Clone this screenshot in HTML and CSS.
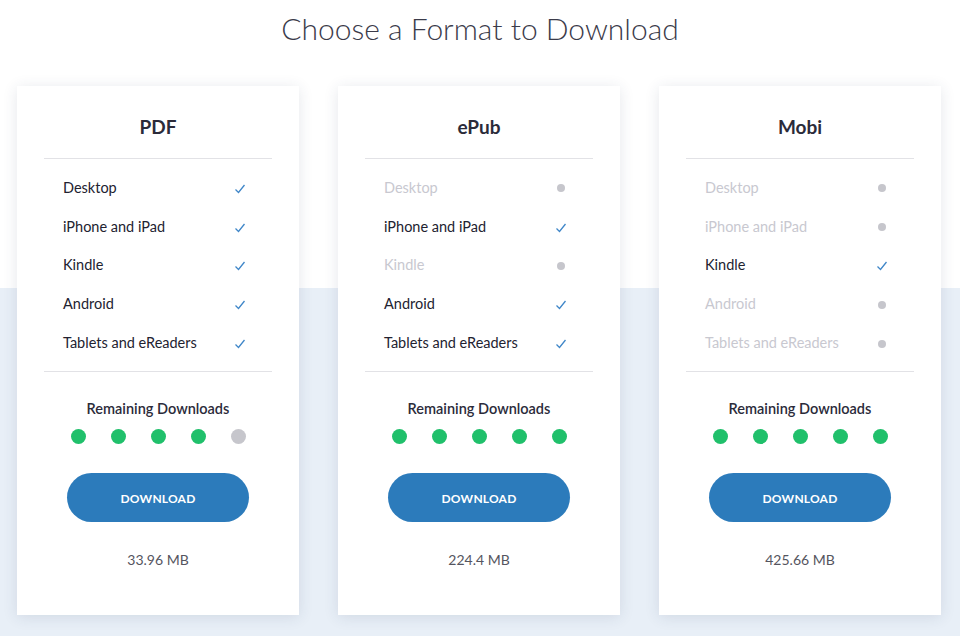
FILE: index.html
```html
<!DOCTYPE html>
<html>
<head>
<meta charset="utf-8">
<link rel="stylesheet" href="styles.css">
</head>
<body>
<div class="page">
  <h1 class="title">Choose a Format to Download</h1>
  <div class="cards">
    <div class="card">
      <h2 class="card-title">PDF</h2>
      <ul class="features">
        <li class="feat on"><span>Desktop</span><svg class="check" viewBox="0 0 10 10"><path d="M0.5 5.5 L3.5 8.5 L9.5 1"/></svg></li>
        <li class="feat on"><span>iPhone and iPad</span><svg class="check" viewBox="0 0 10 10"><path d="M0.5 5.5 L3.5 8.5 L9.5 1"/></svg></li>
        <li class="feat on"><span>Kindle</span><svg class="check" viewBox="0 0 10 10"><path d="M0.5 5.5 L3.5 8.5 L9.5 1"/></svg></li>
        <li class="feat on"><span>Android</span><svg class="check" viewBox="0 0 10 10"><path d="M0.5 5.5 L3.5 8.5 L9.5 1"/></svg></li>
        <li class="feat on"><span>Tablets and eReaders</span><svg class="check" viewBox="0 0 10 10"><path d="M0.5 5.5 L3.5 8.5 L9.5 1"/></svg></li>
      </ul>
      <div class="remaining">Remaining Downloads</div>
      <div class="dots"><i class="dot"></i><i class="dot"></i><i class="dot"></i><i class="dot"></i><i class="dot used"></i></div>
      <button class="btn">DOWNLOAD</button>
      <div class="size">33.96 MB</div>
    </div>
    <div class="card">
      <h2 class="card-title">ePub</h2>
      <ul class="features">
        <li class="feat off"><span>Desktop</span><i class="nodot"></i></li>
        <li class="feat on"><span>iPhone and iPad</span><svg class="check" viewBox="0 0 10 10"><path d="M0.5 5.5 L3.5 8.5 L9.5 1"/></svg></li>
        <li class="feat off"><span>Kindle</span><i class="nodot"></i></li>
        <li class="feat on"><span>Android</span><svg class="check" viewBox="0 0 10 10"><path d="M0.5 5.5 L3.5 8.5 L9.5 1"/></svg></li>
        <li class="feat on"><span>Tablets and eReaders</span><svg class="check" viewBox="0 0 10 10"><path d="M0.5 5.5 L3.5 8.5 L9.5 1"/></svg></li>
      </ul>
      <div class="remaining">Remaining Downloads</div>
      <div class="dots"><i class="dot"></i><i class="dot"></i><i class="dot"></i><i class="dot"></i><i class="dot"></i></div>
      <button class="btn">DOWNLOAD</button>
      <div class="size">224.4 MB</div>
    </div>
    <div class="card">
      <h2 class="card-title">Mobi</h2>
      <ul class="features">
        <li class="feat off"><span>Desktop</span><i class="nodot"></i></li>
        <li class="feat off"><span>iPhone and iPad</span><i class="nodot"></i></li>
        <li class="feat on"><span>Kindle</span><svg class="check" viewBox="0 0 10 10"><path d="M0.5 5.5 L3.5 8.5 L9.5 1"/></svg></li>
        <li class="feat off"><span>Android</span><i class="nodot"></i></li>
        <li class="feat off"><span>Tablets and eReaders</span><i class="nodot"></i></li>
      </ul>
      <div class="remaining">Remaining Downloads</div>
      <div class="dots"><i class="dot"></i><i class="dot"></i><i class="dot"></i><i class="dot"></i><i class="dot"></i></div>
      <button class="btn">DOWNLOAD</button>
      <div class="size">425.66 MB</div>
    </div>
  </div>
</div>
</body>
</html>
```

FILE: styles.css
```css
* { box-sizing: border-box; }
html, body { margin: 0; padding: 0; }
body {
  width: 960px;
  height: 636px;
  overflow: hidden;
  font-family: Lato, "Liberation Sans", sans-serif;
  color: #2b2b3a;
  background: linear-gradient(to bottom, #ffffff 0, #ffffff 288px, #e8eff7 288px, #e8eff7 100%);
}
.page { padding-top: 8px; }
.title {
  margin: 0;
  text-align: center;
  font-weight: 300;
  font-size: 30px;
  line-height: 40px;
  color: #3b3b4a;
}
.cards {
  display: flex;
  gap: 39px;
  padding-left: 17px;
  margin-top: 38px;
}
.card {
  width: 282px;
  height: 529px;
  background: #fff;
  box-shadow: 0 2px 14px rgba(40, 60, 90, 0.12);
  padding: 0 27px;
  display: flex;
  flex-direction: column;
  align-items: stretch;
}
.card-title {
  margin: 0;
  height: 73px;
  border-bottom: 1px solid #e2e2e6;
  text-align: center;
  font-size: 19px;
  font-weight: 700;
  line-height: 82px;
  color: #2b2b3a;
}
.features {
  list-style: none;
  margin: 0;
  padding: 9px 27px 9px 19px;
  border-bottom: 1px solid #e2e2e6;
}
.feat {
  display: flex;
  justify-content: space-between;
  align-items: center;
  height: 38.8px;
  font-size: 14.5px;
  color: #222230;
}
.feat.off { color: #c8c8d0; }
.check {
  width: 10px;
  height: 10px;
  margin-top: 3px;
  fill: none;
  stroke: #3f86c8;
  stroke-width: 1.3;
}
.nodot {
  width: 8px;
  height: 8px;
  border-radius: 50%;
  background: #c6c6cc;
  margin-top: 2px;
  margin-right: 1px;
}
.remaining {
  text-align: center;
  font-size: 14.5px;
  font-weight: 600;
  margin-top: 27px;
  line-height: 20px;
  color: #2b2b3a;
}
.dots {
  display: flex;
  justify-content: center;
  gap: 25px;
  margin-top: 10px;
}
.dot {
  width: 15px;
  height: 15px;
  border-radius: 50%;
  background: #20c06b;
}
.dot.used { background: #c6c6cc; }
.btn {
  align-self: center;
  margin-top: 29px;
  width: 182px;
  height: 49px;
  border: none;
  border-radius: 25px;
  background: #2c7bbb;
  color: #fff;
  font-family: Lato, "Liberation Sans", sans-serif;
  font-weight: 700;
  font-size: 12px;
  letter-spacing: 0.2px;
  padding-top: 3px;
}
.size {
  text-align: center;
  margin-top: 29px;
  font-size: 14px;
  color: #555560;
}
```
